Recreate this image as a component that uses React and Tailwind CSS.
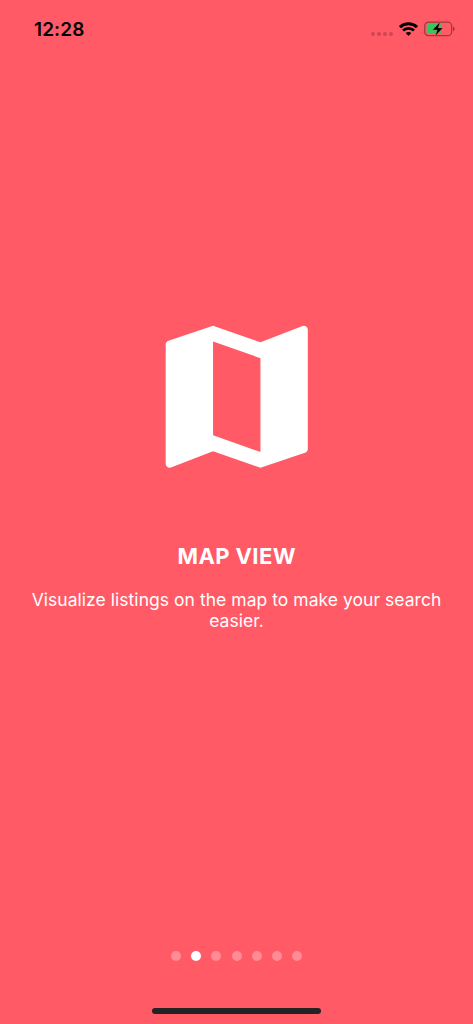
const dots = [0, 1, 2, 3, 4, 5, 6];

function StatusBar() {
  return (
    <header className="flex h-[60px] items-start justify-between pl-[34px] pr-[18px] pt-[19px] text-black">
      <span className="text-[19px] font-semibold leading-[21px] tracking-[0.1px]">12:28</span>
      <div className="flex h-[20px] items-center">
        <div className="mr-[6px] mt-[9px] flex gap-[2px]">
          {[0, 1, 2, 3].map((n) => (
            <span key={n} className="size-[4px] rounded-full bg-black/20" />
          ))}
        </div>
        <svg className="mr-[6px]" width="19" height="14" viewBox="0 0 19 14" fill="none" stroke="currentColor">
          <path d="M1 5.2C5.7.7 13.3.7 18 5.2" strokeWidth="3" />
          <path d="M4 8.6c3.1-2.9 7.9-2.9 11 0" strokeWidth="2.8" />
          <path d="M9.5 13.9 6.7 11c1.5-1.4 4.1-1.4 5.6 0Z" fill="currentColor" stroke="none" />
        </svg>
        <svg width="31" height="16" viewBox="0 0 31 16">
          <rect x=".7" y="1.2" width="26.9" height="13.4" rx="3.7" fill="none" stroke="#000" strokeOpacity=".38" strokeWidth="1.2" />
          <path d="M29 5.4c2.1.7 2.1 4.1 0 4.8Z" fill="#000" fillOpacity=".42" />
          <rect x="2.7" y="3.1" width="15" height="9.6" rx="2" fill="#34c85a" />
          <path d="M16.2.7 8.6 8.9h4.6L11.2 15.2l7.6-8.3h-4.6Z" fill="#000" stroke="#ff5a66" strokeWidth=".4" />
        </svg>
      </div>
    </header>
  );
}

export default function App() {
  return (
    <div className="flex h-[1024px] w-[473px] flex-col bg-[#ff5a66] font-['Inter',sans-serif] text-white">
      <StatusBar />
      <main className="flex grow flex-col items-center pt-[242px]">
        <svg width="189.5" height="189.5" viewBox="0 0 24 24" fill="currentColor">
          <path d="M20.5 3l-.16.03L15 5.1 9 3 3.36 4.9c-.21.07-.36.25-.36.48V20.5c0 .28.22.5.5.5l.16-.03L9 18.9l6 2.1 5.64-1.9c.21-.07.36-.25.36-.48V3.5c0-.28-.22-.5-.5-.5zM15 19l-6-2.11V5l6 2.11V19z" />
        </svg>
        <h1 className="mt-[50.5px] pl-[0.5px] text-[22px] font-bold leading-[28px] tracking-[0.4px]">MAP VIEW</h1>
        <p className="mt-[18.5px] text-center text-[17.5px] leading-[21.3px] tracking-[0.04px]">
          Visualize listings on the map to make your search
          <br />
          easier.
        </p>
      </main>
      <footer className="flex flex-col items-center">
        <div className="flex gap-[10.2px]">
          {dots.map((n) => (
            <span key={n} className={n === 1 ? "size-[10px] rounded-full bg-white" : "size-[10px] rounded-full bg-white/30"} />
          ))}
        </div>
        <div className="mb-[10px] mt-[47px] h-[6px] w-[169px] rounded-full bg-[#242222]" />
      </footer>
    </div>
  );
}
